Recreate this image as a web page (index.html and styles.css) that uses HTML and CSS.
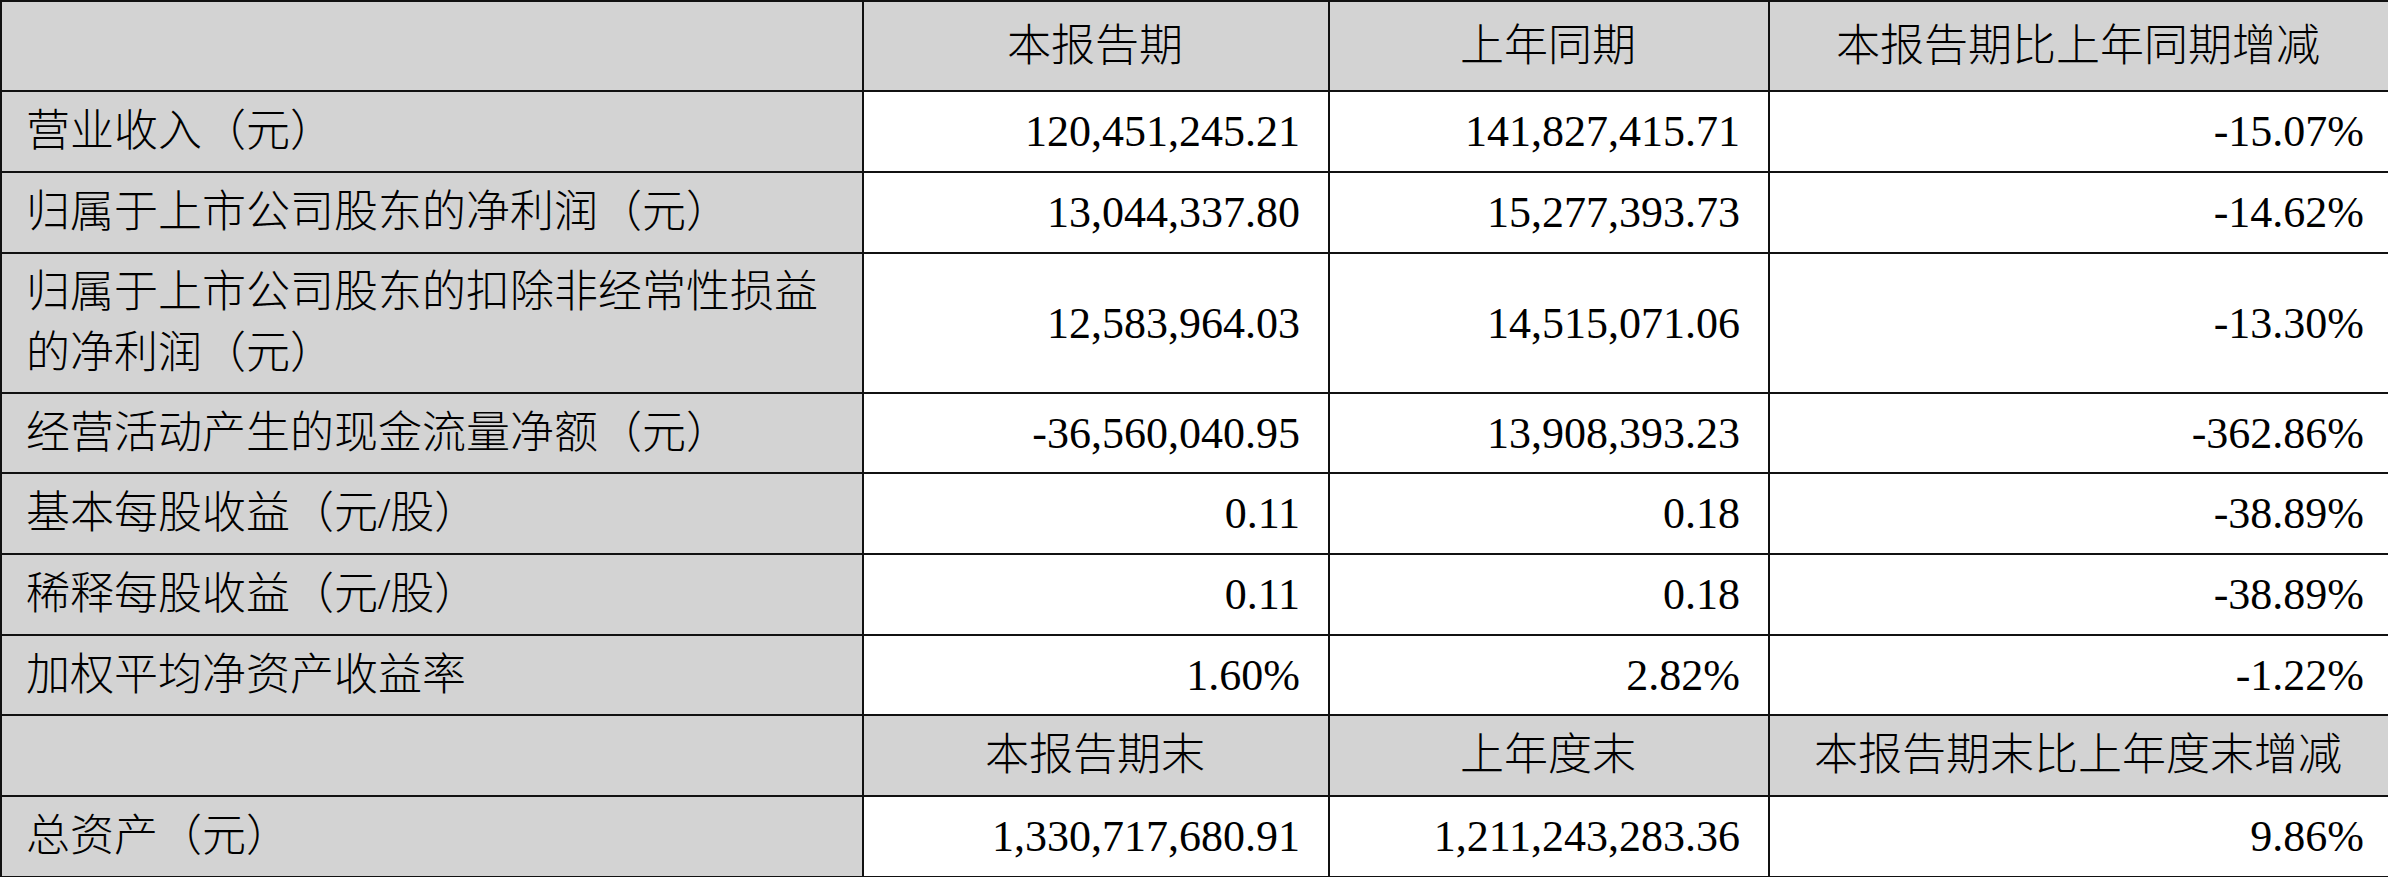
FILE: index.html
```html
<!DOCTYPE html>
<html lang="zh-CN">
<head>
<meta charset="utf-8">
<title>主要会计数据和财务指标</title>
<link rel="stylesheet" href="styles.css">
</head>
<body>
<table class="fin">
  <colgroup>
    <col class="c1"><col class="c2"><col class="c3"><col class="c4">
  </colgroup>
  <tr class="head h90">
    <td class="label"></td><td>本报告期</td><td>上年同期</td><td>本报告期比上年同期增减</td>
  </tr>
  <tr class="h81">
    <td class="label">营业收入（元）</td><td class="num">120,451,245.21</td><td class="num">141,827,415.71</td><td class="num">-15.07%</td>
  </tr>
  <tr class="h81">
    <td class="label">归属于上市公司股东的净利润（元）</td><td class="num">13,044,337.80</td><td class="num">15,277,393.73</td><td class="num">-14.62%</td>
  </tr>
  <tr class="h140">
    <td class="label">归属于上市公司股东的扣除非经常性损益的净利润（元）</td><td class="num">12,583,964.03</td><td class="num">14,515,071.06</td><td class="num">-13.30%</td>
  </tr>
  <tr class="h80">
    <td class="label">经营活动产生的现金流量净额（元）</td><td class="num">-36,560,040.95</td><td class="num">13,908,393.23</td><td class="num">-362.86%</td>
  </tr>
  <tr class="h81">
    <td class="label">基本每股收益（元/股）</td><td class="num">0.11</td><td class="num">0.18</td><td class="num">-38.89%</td>
  </tr>
  <tr class="h81">
    <td class="label">稀释每股收益（元/股）</td><td class="num">0.11</td><td class="num">0.18</td><td class="num">-38.89%</td>
  </tr>
  <tr class="h80">
    <td class="label">加权平均净资产收益率</td><td class="num">1.60%</td><td class="num">2.82%</td><td class="num">-1.22%</td>
  </tr>
  <tr class="head h81">
    <td class="label"></td><td>本报告期末</td><td>上年度末</td><td>本报告期末比上年度末增减</td>
  </tr>
  <tr class="h81">
    <td class="label">总资产（元）</td><td class="num">1,330,717,680.91</td><td class="num">1,211,243,283.36</td><td class="num">9.86%</td>
  </tr>
</table>
</body>
</html>
```
FILE: styles.css
```css
html, body {
  margin: 0;
  padding: 0;
  background: #ffffff;
}

.fin {
  border-collapse: collapse;
  table-layout: fixed;
  width: 2388px;
  font-family: "Liberation Serif", "Noto Sans CJK SC", serif;
  font-size: 44px;
  font-weight: 300;
  color: #000000;
}

.c1 { width: 862px; }
.c2 { width: 466px; }
.c3 { width: 440px; }
.c4 { width: 620px; }

.fin td {
  border: 2px solid #111111;
  padding: 0 26px 0 24px;
  vertical-align: middle;
  line-height: 61px;
  white-space: nowrap;
}

.fin td.label {
  background: #d3d3d3;
  white-space: normal;
  text-align: left;
}

.fin td.num {
  text-align: right;
  padding-right: 28px;
}

.fin tr td.num:last-child {
  padding-right: 24px;
}

.head td {
  background: #d3d3d3;
  text-align: center;
}

.h90 { height: 90px; }
.h81 { height: 81px; }
.h80 { height: 80px; }
.h140 { height: 140px; }
```
